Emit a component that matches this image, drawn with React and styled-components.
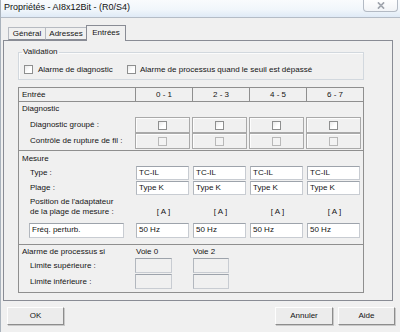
import React from 'react';
import styled, { createGlobalStyle } from 'styled-components';

const GlobalStyle = createGlobalStyle`
  html, body {
    margin: 0;
    padding: 0;
    background: #f0f0f0;
  }
  body {
    font-family: "Liberation Sans", Arial, sans-serif;
    font-size: 8px;
    color: #141414;
  }
  * {
    box-sizing: border-box;
  }
`;

const Window = styled.div`
  width: 400px;
  height: 332px;
  overflow: hidden;
  display: flex;
  flex-direction: column;
  background: #f0f0f0;
  border-left: 1px solid #a9b2bc;
`;

const TitleBar = styled.div`
  height: 17px;
  display: flex;
  align-items: flex-start;
  padding-left: 3px;
  background: linear-gradient(to bottom, #f9fbfd 0%, #f1f6fb 55%, #dfeaf6 100%);
`;

const Title = styled.div`
  font-size: 9px;
  line-height: 10px;
  padding-top: 2px;
  color: #111;
`;

const CloseButton = styled.div`
  margin-left: auto;
  margin-right: 2px;
  margin-top: -1px;
  width: 35px;
  height: 13px;
  display: flex;
  align-items: center;
  justify-content: center;
  background: linear-gradient(to bottom, #ffffff, #f2f4f7);
  border: 1px solid #b3bac4;
  border-top: none;
  border-radius: 0 0 4px 4px;
`;

const Client = styled.div`
  flex: 1;
  display: flex;
  flex-direction: column;
  border-top: 1px solid #b4bcc6;
  padding-left: 2px;
`;

const TabStrip = styled.div`
  height: 15px;
  margin-top: 7px;
  display: flex;
  align-items: flex-end;
  padding-left: 5px;
  position: relative;
  z-index: 1;
`;

const Tab = styled.div`
  width: ${({ $w }) => $w}px;
  height: ${({ $active }) => ($active ? 16 : 13)}px;
  margin-bottom: ${({ $active }) => ($active ? -1 : 0)}px;
  line-height: ${({ $active }) => ($active ? 13 : 12)}px;
  text-align: center;
  background: #f0f0f0;
  border: 1px solid ${({ $active }) => ($active ? '#898c95' : '#b6bac1')};
  border-bottom: ${({ $active }) => ($active ? 'none' : '1px solid #898c95')};
  margin-left: ${({ $first }) => ($first ? 0 : -1)}px;
`;

const Panel = styled.div`
  width: 390px;
  height: 261px;
  border: 1px solid #898c95;
  padding-left: 14px;
`;

const GroupBox = styled.fieldset`
  width: 346px;
  margin: 6px 0 0;
  padding: 0 3px 4px;
  border: 1px solid #d2d8de;
  box-shadow: inset 1px 1px 0 #fbfbfb;
`;

const Legend = styled.legend`
  padding: 0 1px;
  line-height: 10px;
`;

const CheckRow = styled.div`
  display: flex;
  align-items: center;
  height: 12px;
  margin-top: 6px;
  padding-left: 2px;
`;

const CheckItem = styled.label`
  display: flex;
  align-items: center;
  width: ${({ $w }) => ($w ? `${$w}px` : 'auto')};
`;

const Box = styled.span`
  display: inline-block;
  width: 9px;
  height: 9px;
  border: 1px solid ${({ $disabled }) => ($disabled ? '#b8b8b8' : '#8e8f8f')};
  background: ${({ $disabled }) =>
    $disabled ? '#f3f3f3' : 'linear-gradient(135deg, #e9e9e9 0%, #ffffff 60%)'};
  flex: none;
`;

const CheckText = styled.span`
  margin-left: ${({ $gap }) => $gap}px;
  white-space: nowrap;
`;

const Table = styled.div`
  width: 346px;
  margin-top: 7px;
  border: 1px solid #8f8f8f;
`;

const Row = styled.div`
  display: grid;
  grid-template-columns: 116px repeat(3, 57px) 1fr;
  height: ${({ $h }) => $h}px;
  margin-top: ${({ $mt }) => $mt || 0}px;
  align-items: ${({ $align }) => $align || 'start'};
`;

const HeadRow = styled(Row)`
  border-bottom: 1px solid #8f8f8f;
  align-items: stretch;
`;

const HeadCell = styled.div`
  line-height: 13px;
  padding-left: ${({ $left }) => ($left ? 3 : 0)}px;
  text-align: ${({ $left }) => ($left ? 'left' : 'center')};
  border-left: ${({ $left }) => ($left ? 'none' : '1px solid #8f8f8f')};
`;

const Section = styled.div`
  padding-bottom: ${({ $pb }) => $pb}px;
  border-bottom: ${({ $last }) => ($last ? 'none' : '1px solid #8f8f8f')};
`;

const SectionLabel = styled.div`
  grid-column: 1 / 2;
  padding-left: 3px;
  white-space: nowrap;
  line-height: ${({ $h }) => $h}px;
`;

const SubLabel = styled.div`
  padding-left: 11px;
  white-space: nowrap;
  line-height: ${({ $lh }) => $lh || 15}px;
`;

const CheckCell = styled.div`
  width: 55px;
  height: 16px;
  display: flex;
  align-items: center;
  justify-content: center;
  border: 1px solid #a9a9a9;
  box-shadow: inset 1px 1px 0 #fdfdfd;
`;

const Field = styled.div`
  width: ${({ $w }) => $w}px;
  height: ${({ $h }) => $h || 14}px;
  margin-left: ${({ $ml }) => $ml || 0}px;
  padding-left: 2px;
  line-height: 12px;
  white-space: nowrap;
  background: ${({ $disabled }) => ($disabled ? '#f0f0f0' : '#ffffff')};
  border: 1px solid #c8ccd2;
  border-top-color: #9da3ab;
  border-left-color: #b2b7be;
`;

const CenterText = styled.div`
  text-align: center;
  line-height: 10px;
`;

const ColText = styled.div`
  padding-left: 1px;
  line-height: 13px;
`;

const Position = styled.div`
  display: grid;
  grid-template-columns: 116px repeat(3, 57px) 1fr;
  margin-top: 1px;
`;

const PositionLabel = styled.div`
  padding-left: 11px;
  line-height: 10px;
  white-space: nowrap;
`;

const ButtonRow = styled.div`
  display: flex;
  justify-content: space-between;
  margin-top: 6px;
  padding: 0 5px 0 4px;
`;

const ButtonGroup = styled.div`
  display: flex;
  gap: 5px;
`;

const Button = styled.div`
  width: ${({ $w }) => $w}px;
  height: 18px;
  line-height: 16px;
  text-align: center;
  background: #ececec;
  border: 1px solid;
  border-color: #fdfdfd #8d8d8d #8d8d8d #fdfdfd;
  box-shadow: 1px 1px 0 #c9c9c9;
`;

const cols = ['0 - 1', '2 - 3', '4 - 5', '6 - 7'];

const App = () => {
  return (
    <>
      <GlobalStyle />
      <Window>
        <TitleBar>
          <Title>Propriétés - AI8x12Bit - (R0/S4)</Title>
          <CloseButton>
            <svg width="8" height="7" viewBox="0 0 8 7">
              <path d="M1 0.5 L7 6.5 M7 0.5 L1 6.5" stroke="#8a9099" strokeWidth="1.6" />
              <path d="M1 0.5 L7 6.5 M7 0.5 L1 6.5" stroke="#c9ced5" strokeWidth="0.6" />
            </svg>
          </CloseButton>
        </TitleBar>
        <Client>
          <TabStrip>
            <Tab $w={38} $first>Général</Tab>
            <Tab $w={42}>Adresses</Tab>
            <Tab $w={40} $active>Entrées</Tab>
          </TabStrip>
          <Panel>
            <GroupBox>
              <Legend>Validation</Legend>
              <CheckRow>
                <CheckItem $w={103}>
                  <Box />
                  <CheckText $gap={5}>Alarme de diagnostic</CheckText>
                </CheckItem>
                <CheckItem>
                  <Box />
                  <CheckText $gap={4}>Alarme de processus quand le seuil est dépassé</CheckText>
                </CheckItem>
              </CheckRow>
            </GroupBox>

            <Table>
              <HeadRow $h={14}>
                <HeadCell $left>Entrée</HeadCell>
                {cols.map((c) => (
                  <HeadCell key={c}>{c}</HeadCell>
                ))}
              </HeadRow>

              <Section $pb={1}>
                <Row $h={14}>
                  <SectionLabel $h={14}>Diagnostic</SectionLabel>
                </Row>
                <Row $h={16} $mt={1}>
                  <SubLabel $lh={16}>Diagnostic groupé :</SubLabel>
                  {cols.map((c) => (
                    <CheckCell key={c}>
                      <Box />
                    </CheckCell>
                  ))}
                </Row>
                <Row $h={16}>
                  <SubLabel $lh={16}>Contrôle de rupture de fil :</SubLabel>
                  {cols.map((c) => (
                    <CheckCell key={c}>
                      <Box $disabled />
                    </CheckCell>
                  ))}
                </Row>
              </Section>

              <Section $pb={6}>
                <Row $h={15}>
                  <SectionLabel $h={15}>Mesure</SectionLabel>
                </Row>
                <Row $h={15}>
                  <SubLabel $lh={14}>Type :</SubLabel>
                  {cols.map((c) => (
                    <Field key={c} $w={53} $ml={1}>TC-IL</Field>
                  ))}
                </Row>
                <Row $h={15}>
                  <SubLabel $lh={14}>Plage :</SubLabel>
                  {cols.map((c) => (
                    <Field key={c} $w={53} $ml={1}>Type K</Field>
                  ))}
                </Row>
                <Position>
                  <PositionLabel>
                    Position de l'adaptateur
                    <br />
                    de la plage de mesure :
                  </PositionLabel>
                  {cols.map((c) => (
                    <CenterText key={c}>
                      <br />[ A ]
                    </CenterText>
                  ))}
                </Position>
                <Row $h={15} $mt={6}>
                  <Field $w={95} $h={15} $ml={10}>Fréq. perturb.</Field>
                  {cols.map((c) => (
                    <Field key={c} $w={53} $h={15} $ml={1}>50 Hz</Field>
                  ))}
                </Row>
              </Section>

              <Section $pb={2} $last>
                <Row $h={13}>
                  <SectionLabel $h={13}>Alarme de processus si</SectionLabel>
                  <ColText>Voie 0</ColText>
                  <ColText>Voie 2</ColText>
                </Row>
                <Row $h={16}>
                  <SubLabel>Limite supérieure :</SubLabel>
                  <Field $w={37} $h={15} $disabled />
                  <Field $w={36} $h={15} $ml={1} $disabled />
                </Row>
                <Row $h={16}>
                  <SubLabel>Limite inférieure :</SubLabel>
                  <Field $w={37} $h={15} $disabled />
                  <Field $w={36} $h={15} $ml={1} $disabled />
                </Row>
              </Section>
            </Table>
          </Panel>

          <ButtonRow>
            <Button $w={57}>OK</Button>
            <ButtonGroup>
              <Button $w={58}>Annuler</Button>
              <Button $w={57}>Aide</Button>
            </ButtonGroup>
          </ButtonRow>
        </Client>
      </Window>
    </>
  );
};

export default App;
